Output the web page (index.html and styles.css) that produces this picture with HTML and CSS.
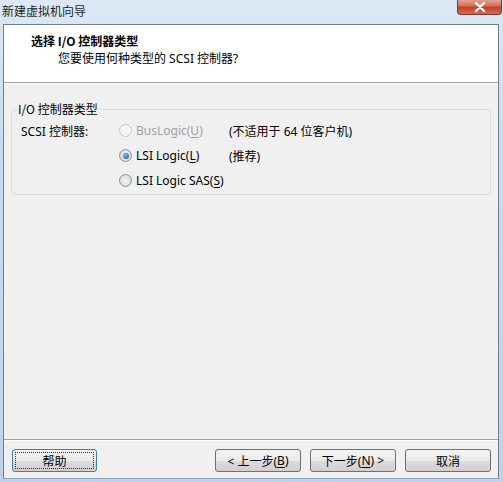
FILE: index.html
```html
<!DOCTYPE html>
<html lang="zh">
<head>
<meta charset="utf-8">
<title>新建虚拟机向导</title>
<link rel="stylesheet" href="styles.css">
</head>
<body>
<div class="window">
  <div class="titlebar">
    <span class="title">新建虚拟机向导</span>
    <div class="close">
      <svg width="14" height="10" viewBox="0 0 14 10"><path d="M3 1 L11 9 M11 1 L3 9" stroke="#fff" stroke-width="2.4" stroke-linecap="round"/></svg>
    </div>
  </div>
  <div class="client">
    <div class="header">
      <div class="h-title">选择 I/O 控制器类型</div>
      <div class="h-sub">您要使用何种类型的 SCSI 控制器?</div>
    </div>
    <div class="body">
      <fieldset class="group">
        <legend>I/O 控制器类型</legend>
        <div class="grid">
          <div class="label">SCSI 控制器:</div>
          <div class="opt disabled"><span class="radio"></span><span>BusLogic(<u>U</u>)</span></div>
          <div class="note">(不适用于 64 位客户机)</div>
          <div class="label"></div>
          <div class="opt"><span class="radio checked"></span><span>LSI Logic(<u>L</u>)</span></div>
          <div class="note">(推荐)</div>
          <div class="label"></div>
          <div class="opt"><span class="radio"></span><span>LSI Logic SAS(<u>S</u>)</span></div>
          <div class="note"></div>
        </div>
      </fieldset>
    </div>
    <div class="footer">
      <button class="btn help"><span class="focus">帮助</span></button>
      <div class="spacer"></div>
      <button class="btn">&lt; 上一步(<u>B</u>)</button>
      <button class="btn">下一步(<u>N</u>) &gt;</button>
      <button class="btn cancel">取消</button>
    </div>
  </div>
</div>
</body>
</html>
```

FILE: styles.css
```css
* { box-sizing: border-box; }
html, body { margin: 0; padding: 0; }
body {
  width: 503px;
  height: 482px;
  overflow: hidden;
  font-family: "Noto Sans", "Noto Sans CJK SC", sans-serif;
  font-size: 12px;
  color: #000;
  background: #b9cde5;
}
.window {
  width: 503px;
  height: 482px;
  display: flex;
  flex-direction: column;
  background: linear-gradient(to bottom, #dce8f5 0%, #c9dbef 30%, #bed3ea 100%);
  padding: 0 4px 3px 3px;
}
.titlebar {
  height: 24px;
  display: flex;
  align-items: flex-start;
  position: relative;
}
.title {
  font-family: "Noto Sans CJK SC", sans-serif;
  font-size: 12px;
  line-height: 14px;
  margin-top: 4px;
  margin-left: -1px;
  color: #1e1e1e;
}
.close {
  position: absolute;
  right: -3px;
  top: -1px;
  width: 45px;
  height: 16px;
  border: 1px solid #7a3a30;
  border-top: none;
  border-radius: 0 0 4px 4px;
  background: linear-gradient(to bottom, #e9a99a 0%, #d7705b 45%, #c2412b 55%, #d66a4f 100%);
  display: flex;
  align-items: center;
  justify-content: center;
}
.client {
  flex: 1;
  display: flex;
  flex-direction: column;
  background: #f0f0f0;
  border: 1px solid #6d7f95;
  border-bottom-color: #8ea2b8;
}
.header {
  height: 58px;
  background: #fff;
  border-bottom: 1px solid #a0a0a0;
  box-shadow: 0 1px 0 #fff;
  padding: 8px 0 0 27px;
}
.h-title {
  font-family: "Noto Sans CJK SC", sans-serif;
  font-weight: bold;
  font-size: 12px;
  line-height: 16px;
}
.h-sub {
  font-family: "Noto Sans", "Noto Sans CJK SC", sans-serif;
  font-size: 12px;
  line-height: 16px;
  margin-top: 2px;
  padding-left: 27px;
}
.body {
  flex: 1;
  padding: 19px 7px 0 7px;
}
.group {
  margin: 0;
  border: 1px solid #d5dfe5;
  border-radius: 3px;
  padding: 0 0 7px 9px;
  height: 93px;
}
.group legend {
  font-family: "Noto Sans CJK SC", sans-serif;
  padding: 0 2px 0 0;
  margin-left: -3px;
  line-height: 14px;
}
.grid {
  display: grid;
  grid-template-columns: 98px 110px auto;
  grid-auto-rows: 25px;
  align-items: center;
  margin-top: 2px;
}
.label, .note {
  font-family: "Noto Sans", "Noto Sans CJK SC", sans-serif;
  white-space: nowrap;
}
.opt {
  display: flex;
  align-items: center;
  gap: 4px;
  white-space: nowrap;
}
.opt.disabled { color: #a0a0a0; }
.radio {
  width: 13px;
  height: 13px;
  border-radius: 50%;
  border: 1px solid #8e8f8f;
  background: radial-gradient(circle at 50% 50%, #f4f4f4 0%, #dcdcdc 70%, #cfcfcf 100%);
  position: relative;
  flex: none;
}
.opt.disabled .radio {
  border-color: #c8c8c8;
  background: #f4f4f4;
}
.radio.checked::after {
  content: "";
  position: absolute;
  left: 2.5px;
  top: 2.5px;
  width: 6px;
  height: 6px;
  border-radius: 50%;
  background: radial-gradient(circle at 40% 35%, #7fc3f3 0%, #2a79c4 60%, #1a4f8c 100%);
}
.footer {
  height: 39px;
  border-top: 1px solid #a0a0a0;
  box-shadow: inset 0 1px 0 #fff;
  display: flex;
  align-items: flex-start;
  padding: 9px 7px 0 8px;
  gap: 9px;
}
.spacer { flex: 1; }
.btn {
  width: 86px;
  height: 23px;
  margin: 0;
  padding: 0;
  border: 1px solid #707070;
  border-radius: 3px;
  background: linear-gradient(to bottom, #f2f2f2 0%, #ebebeb 50%, #dddddd 51%, #cfcfcf 100%);
  font-family: "Noto Sans", "Noto Sans CJK SC", sans-serif;
  font-size: 12px;
  color: #000;
  display: flex;
  align-items: center;
  justify-content: center;
}
.btn.help {
  width: 85px;
  border-color: #3c7fb1;
  padding: 2px;
}
.btn.help .focus {
  flex: 1;
  align-self: stretch;
  display: flex;
  align-items: center;
  justify-content: center;
  border: 1px dotted #333;
}
.btn.cancel { width: 86px; }
u { text-decoration: underline; text-underline-offset: 2px; }
```
